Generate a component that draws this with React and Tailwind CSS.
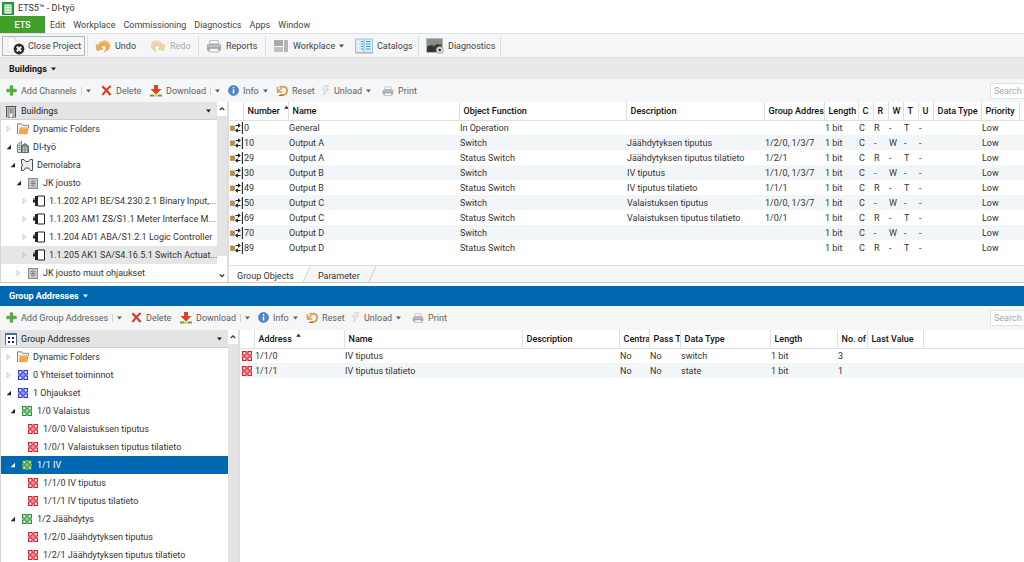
import React, { useState } from 'react';

/* ---------- Iconos ---------- */

const Caret = ({ className = '' }) => (
  <svg className={`shrink-0 ${className}`} width="5" height="4" viewBox="0 0 5 4" fill="currentColor">
    <path d="M0 0.5h5L2.5 3.5z" />
  </svg>
);

const SortUp = () => (
  <svg className="shrink-0" width="5" height="4" viewBox="0 0 5 4" fill="#222">
    <path d="M0.2 3.8h4.6L2.5 0.8z" />
  </svg>
);

const AppIcon = () => (
  <svg width="12" height="13" viewBox="0 0 12 13">
    <rect x="0.5" y="0.5" width="11" height="12" fill="#2f9e3c" stroke="#1f8f2b" />
    <rect x="2.5" y="2.5" width="7" height="9" fill="#fff" />
    <path d="M4 3.5v7M6 3.500v7M8 3.500v7" stroke="#2f9e3c" strokeWidth="0.9" strokeDasharray="1.500 1" fill="none" />
  </svg>
);

const CloseProjectIcon = () => (
  <svg width="18" height="18" viewBox="0 0 18 18">
    <path d="M1 1h7l3 3v11H1z" fill="#fff" stroke="#dcdfe2" strokeWidth="0.8" />
    <path d="M8 1v3h3" fill="#eceef0" stroke="#d2d5d8" strokeWidth="0.8" />
    <circle cx="12" cy="12" r="5.4" fill="#2b2b2b" />
    <path d="M9.8 9.8l4.4 4.4M14.2 9.8l-4.4 4.4" stroke="#fff" strokeWidth="2" />
  </svg>
);

const ArrowIcon = ({ redo = false }) => (
  <svg width="16" height="16" viewBox="0 0 16 16">
    <g transform={redo ? 'matrix(-1 0 0 1 16 0)' : undefined} opacity={redo ? 0.5 : 1}>
      <path
        d="M1 6.5l1 6 6-1.5-2-1.5c1-2.2 3.6-2.8 4.8-1.2 1 1.5.3 3.8-1.6 5.4 3.8-1 6-4 5.4-7C13.8 3 8.5 1 4.3 5.3L3.3 7.6z"
        fill="#f2ab4f"
        stroke="#d98b2b"
        strokeWidth="0.5"
      />
      <path d="M5.5 5c2.5-2.5 6.5-2 8 1.5" stroke="#fbd49a" strokeWidth="1" fill="none" />
    </g>
  </svg>
);

const PrinterIcon = ({ className = 'w-4 h-4' }) => (
  <svg className={className} viewBox="0 0 16 16">
    <path d="M4 2.5h8l1 4H3z" fill="#fafafa" stroke="#a9adb0" strokeWidth="0.8" />
    <path d="M1 6.5h2l1-1h8l1 1h2v6h-2.5l-1-2h-7l-1 2H1z" fill="#a4a8ab" />
    <path d="M2 8h12" stroke="#d9dbdd" strokeWidth="1" />
    <path d="M4 10.5h8l1.2 3.5H2.8z" fill="#f4f5f5" stroke="#9ea2a5" strokeWidth="0.7" />
  </svg>
);

const WorkplaceIcon = () => (
  <svg width="15" height="14" viewBox="0 0 15 14" shapeRendering="crispEdges">
    <rect x="0" y="1" width="9" height="6" fill="#a9a9a9" />
    <rect x="0" y="8" width="9" height="5" fill="#c0c0c0" />
    <rect x="10" y="1" width="4" height="12" fill="#b5b5b5" />
  </svg>
);

const CatalogIcon = () => (
  <svg width="18" height="16" viewBox="0 0 18 16">
    <path d="M0.5 1h8l.5.5.5-.5h8v13.5h-17z" fill="#dfeef6" stroke="#8fb9cf" strokeWidth="0.8" />
    <path d="M9 1.5v13" stroke="#7ba7bf" strokeWidth="0.8" />
    <path d="M6 3.5h2M6 6h2M6 8.5h2M6 11h2M11 3.5h4.5M11 6h4.5M11 8.5h4.5M11 11h4.5" stroke="#3d9cd2" strokeWidth="1.1" />
    <path d="M2 3h3v2.5H2zM2 7h3v2H2zM2 10.5h3v2H2z" fill="#fff" stroke="#b5d1df" strokeWidth="0.4" />
    <path d="M0.5 15.2h17" stroke="#c9a277" strokeWidth="0.7" />
  </svg>
);

const DiagnosticsIcon = () => (
  <svg width="18" height="16" viewBox="0 0 18 16">
    <rect x="0.5" y="0.5" width="16" height="14" fill="#55605a" stroke="#b9bcba" />
    <path d="M1 1h15v5L1 8z" fill="#859187" />
    <path d="M1 9l4-2 3 2 3-3 5 2v6H1z" fill="#2d3b2c" />
    <circle cx="13.8" cy="12" r="3.6" fill="#d8dad9" stroke="#888" strokeWidth="0.6" />
    <circle cx="13.8" cy="12" r="1.2" fill="#222" />
  </svg>
);

const PlusIcon = () => (
  <svg width="11" height="11" viewBox="0 0 11 11">
    <path d="M4 .5h3V4h3.5v3H7v3.5H4V7H.5V4H4z" fill="#55a83f" stroke="#7cc468" strokeWidth="0.5" />
  </svg>
);

const DeleteIcon = () => (
  <svg width="11" height="11" viewBox="0 0 11 11">
    <path d="M1.3 1.3C4 3.5 7 7 9.5 10M9.7 1C6.5 3.5 3.5 7 1.5 10" stroke="#dc3a22" strokeWidth="2.2" fill="none" />
  </svg>
);

const DownloadIcon = () => (
  <svg width="12" height="12" viewBox="0 0 12 12">
    <path d="M4 0h4v4h3.5L6 9.5.5 4H4z" fill="#dc4327" />
    <path d="M0 10.5h4" stroke="#59a94a" strokeWidth="2" />
    <path d="M4 10.5h4" stroke="#e8c548" strokeWidth="2" />
    <path d="M8 10.5h4" stroke="#59a94a" strokeWidth="2" />
  </svg>
);

const InfoIcon = () => (
  <svg width="11" height="11" viewBox="0 0 11 11">
    <circle cx="5.5" cy="5.5" r="5" fill="#4f88c6" stroke="#3a6fae" strokeWidth="0.6" />
    <path d="M5.5 4.6v4M5.5 2v1.5" stroke="#fff" strokeWidth="1.5" />
  </svg>
);

const ResetIcon = () => (
  <svg width="12" height="12" viewBox="0 0 12 12">
    <path d="M3.5 1.7h4c5 0 4.5 8-.5 8.3H4" fill="none" stroke="#dd9e4f" strokeWidth="2" />
    <path d="M1.5 2v5h5M2 6.5l4-3.5" fill="none" stroke="#dd9e4f" strokeWidth="1.6" />
    <path d="M3 10.5h4" stroke="#a56e2c" strokeWidth="1" />
  </svg>
);

const BoltIcon = () => (
  <svg width="8" height="11" viewBox="0 0 8 11">
    <path d="M3 .5L.8 5h2L1.8 10l5-6H4.3L6.5.5z" fill="#f1f2f3" stroke="#c3c6c9" strokeWidth="0.7" />
  </svg>
);

const BuildingHeadIcon = () => (
  <svg width="12" height="13" viewBox="0 0 12 13">
    <path d="M.5 1.5h11M1.5 1.5v11M10.5 1.5v11" stroke="#555" strokeWidth="1" />
    <rect x="3" y="3" width="6" height="9.5" fill="#c4c4c4" stroke="#666" strokeWidth="0.7" />
    <path d="M4.5 5h3M4.5 7h3" stroke="#444" strokeWidth="0.8" />
    <path d="M5 9h2v3.5H5z" fill="#eee" />
  </svg>
);

const GroupHeadIcon = () => (
  <svg width="12" height="12" viewBox="0 0 12 12" shapeRendering="crispEdges">
    <rect x="0" y="0" width="12" height="12" fill="#fff" />
    <path d="M0 0h12v2H0zM0 2h1v10H0zM11 2h1v10h-1z" fill="#5d6b8a" />
    <path d="M3 4h2v2H3zM7 4h2v2H7zM3 8h2v2H3zM7 8h2v2H7z" fill="#1414d8" />
  </svg>
);

const FolderIcon = () => (
  <svg width="12" height="12" viewBox="0 0 12 12">
    <path d="M.5 11V.8h4l1 1.5h6V5" fill="#f4f4f4" stroke="#777" strokeWidth="0.9" />
    <path d="M2.8 4.2h9L10.5 11.3h-9z" fill="#eda94c" />
    <path d="M3.5 5h7.5" stroke="#f9d08c" strokeWidth="0.8" />
  </svg>
);

const HouseIcon = () => (
  <svg width="12" height="12" viewBox="0 0 12 12">
    <path d="M.5 3.5l4-3v11h-4z" fill="#d9dedc" stroke="#5d6663" strokeWidth="0.8" />
    <path d="M1.5 4.5h2M1.5 6.5h2M1.5 8.5h2" stroke="#5d6663" strokeWidth="0.8" />
    <path d="M4.5 5l3.5-2.5L11.5 5v6.5h-7z" fill="#7f9089" stroke="#4b5451" strokeWidth="0.8" />
    <path d="M6 6.5h1.3V8H6zM8.7 6.5H10V8H8.700zM6 9.2h1.300v1.500H6zM8.700 9.200H10v1.500H8.700z" fill="#dfe6e3" />
  </svg>
);

// Planta del edificio: contorno con accesos en pico
const BuildingPartIcon = () => (
  <svg width="12" height="12" viewBox="0 0 12 12">
    <path d="M.5.5H3L4.500 2.500h3L9 .5h2.500v11H9.500L7.500 9h-3L2.500 11.500h-2V7L2 6 .5 5z" fill="#ececec" stroke="#4d4d4d" strokeWidth="1" />
  </svg>
);

const CabinetIcon = () => (
  <svg width="10" height="11" viewBox="0 0 10 11">
    <rect x="0.5" y="0.5" width="9" height="10" fill="#c9c9c9" stroke="#8a8a8a" />
    <path d="M5 2v7M2.5 5.5h5M3 3.5h1M6 3.5h1M3 7.5h1M6 7.5h1" stroke="#6f6f6f" strokeWidth="0.8" />
  </svg>
);

const DeviceIcon = () => (
  <svg width="12" height="12" viewBox="0 0 12 12">
    <path d="M4.5 1h7v10h-7z" fill="#fff" stroke="#222" strokeWidth="1" />
    <path d="M2 1h2.5v10H2zM0 4.5h2v3H0z" fill="#222" />
    <path d="M0 3.5h2" stroke="#777" strokeWidth="0.7" />
  </svg>
);

// Icono de dirección de grupo: cuatro celdas enlazadas
const GroupIcon = ({ className = 'text-[#e0202c]', active = false }) => (
  <svg className={`shrink-0 ${className}`} width="10" height="10" viewBox="0 0 10 10">
    {active && <rect width="10" height="10" fill="#d5e8c3" />}
    <g fill="none" stroke="currentColor" strokeWidth="1.2">
      <rect x="0.6" y="0.6" width="3.4" height="3.4" />
      <rect x="6" y="0.6" width="3.4" height="3.4" />
      <rect x="0.6" y="6" width="3.4" height="3.4" />
      <rect x="6" y="6" width="3.4" height="3.4" />
      <path d="M4 2.2h2M2.2 4v2M7.8 4v2M4 7.8h2" strokeWidth="0.9" />
    </g>
    <rect x="4.3" y="4.3" width="1.4" height="1.4" fill="currentColor" opacity="0.4" />
  </svg>
);

const ObjectIcon = () => (
  <svg width="13" height="12" viewBox="0 0 13 12">
    <rect x="0.500" y="4" width="4" height="4.500" fill="#c08a3c" stroke="#9a6a28" strokeWidth="0.5" />
    <path d="M5.5 3.5h3M7.5 8.5h3" stroke="#222" strokeWidth="1" />
    <path d="M8 1.3l2.8 2.2L8 5.7zM7.800 6.300L5 8.500l2.800 2.200z" fill="#111" />
    <path d="M12.4 0v12" stroke="#222" strokeWidth="1.1" />
  </svg>
);

const Expander = ({ state, light }) => {
  if (state === 'none') return <span className="w-2 shrink-0" />;
  return (
    <svg className="shrink-0" width="8" height="8" viewBox="0 0 8 8">
      {state === 'open' ? (
        <path d="M6 1.8v4.4H1.6z" fill={light ? '#fff' : '#222'} />
      ) : (
        <path d="M2 1.5L5 4 2 6.5z" fill="none" stroke="#b9bcbf" strokeWidth="0.8" />
      )}
    </svg>
  );
};

/* ---------- Datos ---------- */

const menuItems = ['Edit', 'Workplace', 'Commissioning', 'Diagnostics', 'Apps', 'Window'];

const buildingTree = [
  { label: 'Dynamic Folders', state: 'closed', icon: <FolderIcon />, pad: 'pl-1' },
  { label: 'DI-työ', state: 'open', icon: <HouseIcon />, pad: 'pl-1' },
  { label: 'Demolabra', state: 'open', icon: <BuildingPartIcon />, pad: 'pl-2' },
  { label: 'JK jousto', state: 'open', icon: <CabinetIcon />, pad: 'pl-[14px]' },
  { label: '1.1.202 AP1 BE/S4.230.2.1 Binary Input,...', state: 'closed', icon: <DeviceIcon />, pad: 'pl-5' },
  { label: '1.1.203 AM1 ZS/S1.1 Meter Interface M...', state: 'closed', icon: <DeviceIcon />, pad: 'pl-5' },
  { label: '1.1.204 AD1 ABA/S1.2.1 Logic Controller', state: 'closed', icon: <DeviceIcon />, pad: 'pl-5' },
  { label: '1.1.205 AK1 SA/S4.16.5.1 Switch Actuat...', state: 'closed', icon: <DeviceIcon />, pad: 'pl-5', hover: true },
  { label: 'JK jousto muut ohjaukset', state: 'closed', icon: <CabinetIcon />, pad: 'pl-[14px]' },
];

const main = <GroupIcon className="text-[#2b35e6]" />;
const middle = <GroupIcon className="text-[#2f8f3a]" />;
const address = <GroupIcon />;

const groupTree = [
  { label: 'Dynamic Folders', state: 'closed', icon: <FolderIcon />, pad: 'pl-1' },
  { label: '0 Yhteiset toiminnot', state: 'closed', icon: main, pad: 'pl-1' },
  { label: '1 Ohjaukset', state: 'open', icon: main, pad: 'pl-1' },
  { label: '1/0 Valaistus', state: 'open', icon: middle, pad: 'pl-2' },
  { label: '1/0/0 Valaistuksen tiputus', state: 'none', icon: address, pad: 'pl-[14px]' },
  { label: '1/0/1 Valaistuksen tiputus tilatieto', state: 'none', icon: address, pad: 'pl-[14px]' },
  { label: '1/1 IV', state: 'open', icon: <GroupIcon className="text-[#2f8f3a]" active />, pad: 'pl-2', selected: true },
  { label: '1/1/0 IV tiputus', state: 'none', icon: address, pad: 'pl-[14px]' },
  { label: '1/1/1 IV tiputus tilatieto', state: 'none', icon: address, pad: 'pl-[14px]' },
  { label: '1/2 Jäähdytys', state: 'open', icon: middle, pad: 'pl-2' },
  { label: '1/2/0 Jäähdytyksen tiputus', state: 'none', icon: address, pad: 'pl-[14px]' },
  { label: '1/2/1 Jäähdytyksen tiputus tilatieto', state: 'none', icon: address, pad: 'pl-[14px]' },
];

const objectColumns = [
  { label: '', width: 'w-[14px]' },
  { label: 'Number', width: 'w-[45px]', sorted: true },
  { label: 'Name', width: 'w-[171px]' },
  { label: 'Object Function', width: 'w-[167px]' },
  { label: 'Description', width: 'w-[138px]' },
  { label: 'Group Addres', width: 'w-[60px]' },
  { label: 'Length', width: 'w-[34px]' },
  { label: 'C', width: 'w-[15px]' },
  { label: 'R', width: 'w-[15px]' },
  { label: 'W', width: 'w-[15px]' },
  { label: 'T', width: 'w-[15px]' },
  { label: 'U', width: 'w-[15px]' },
  { label: 'Data Type', width: 'w-[48px]' },
  { label: 'Priority', width: 'w-[38px]' },
];

const objectRows = [
  ['0', 'General', 'In Operation', '', '', '1 bit', 'C', 'R', '-', 'T', '-', '', 'Low'],
  ['10', 'Output A', 'Switch', 'Jäähdytyksen tiputus', '1/2/0, 1/3/7', '1 bit', 'C', '-', 'W', '-', '-', '', 'Low'],
  ['29', 'Output A', 'Status Switch', 'Jäähdytyksen tiputus tilatieto', '1/2/1', '1 bit', 'C', 'R', '-', 'T', '-', '', 'Low'],
  ['30', 'Output B', 'Switch', 'IV tiputus', '1/1/0, 1/3/7', '1 bit', 'C', '-', 'W', '-', '-', '', 'Low'],
  ['49', 'Output B', 'Status Switch', 'IV tiputus tilatieto', '1/1/1', '1 bit', 'C', 'R', '-', 'T', '-', '', 'Low'],
  ['50', 'Output C', 'Switch', 'Valaistuksen tiputus', '1/0/0, 1/3/7', '1 bit', 'C', '-', 'W', '-', '-', '', 'Low'],
  ['69', 'Output C', 'Status Switch', 'Valaistuksen tiputus tilatieto', '1/0/1', '1 bit', 'C', 'R', '-', 'T', '-', '', 'Low'],
  ['70', 'Output D', 'Switch', '', '', '1 bit', 'C', '-', 'W', '-', '-', '', 'Low'],
  ['89', 'Output D', 'Status Switch', '', '', '1 bit', 'C', 'R', '-', 'T', '-', '', 'Low'],
];

const addressColumns = [
  { label: '', width: 'w-[14px]' },
  { label: 'Address', width: 'w-[90px]', sorted: true },
  { label: 'Name', width: 'w-[178px]' },
  { label: 'Description', width: 'w-[97px]' },
  { label: 'Centra', width: 'w-[30px]' },
  { label: 'Pass T', width: 'w-[31px]' },
  { label: 'Data Type', width: 'w-[90px]' },
  { label: 'Length', width: 'w-[67px]' },
  { label: 'No. of', width: 'w-[30px]' },
  { label: 'Last Value', width: 'w-[56px]' },
];

const addressRows = [
  ['1/1/0', 'IV tiputus', '', 'No', 'No', 'switch', '1 bit', '3', ''],
  ['1/1/1', 'IV tiputus tilatieto', '', 'No', 'No', 'state', '1 bit', '1', ''],
];

/* ---------- Componentes ---------- */

const Separator = () => <span className="w-px h-5 bg-[#dcdee0] shrink-0" />;

const ToolButton = ({ icon, label, caret, split, width, disabled = false }) => (
  <div className={`flex items-center shrink-0 ${width}`}>
    <button type="button" disabled={disabled} className="flex items-center gap-1 disabled:text-[#a9abad]">
      {icon}
      <span>{label}</span>
      {caret && <Caret />}
    </button>
    {split && (
      <button type="button" aria-label={`${label} options`} className="flex items-center gap-1 ml-1">
        <span className="w-px h-2 bg-[#d0d2d4]" />
        <Caret />
      </button>
    )}
  </div>
);

const PanelToolbar = ({ addLabel, addWidth, search, onSearch }) => (
  <div className="flex items-center h-[23px] pl-[6px] bg-[#f5f6f8] text-[#5c5f62] shrink-0">
    <ToolButton icon={<PlusIcon />} label={addLabel} split width={addWidth} />
    <ToolButton icon={<DeleteIcon />} label="Delete" width="w-[49px]" />
    <ToolButton icon={<DownloadIcon />} label="Download" split width="w-[78px]" />
    <ToolButton icon={<InfoIcon />} label="Info" caret width="w-12" />
    <ToolButton icon={<ResetIcon />} label="Reset" width="w-[46px]" />
    <ToolButton icon={<BoltIcon />} label="Unload" caret width="w-[60px]" />
    <ToolButton icon={<PrinterIcon className="w-3 h-3" />} label="Print" width="w-9" />
    <input
      type="text"
      aria-label="Search"
      placeholder="Search"
      value={search}
      onChange={(e) => onSearch(e.target.value)}
      className="ml-auto w-[34px] h-4 pl-[3px] bg-white border border-r-0 border-[#dfe1e3] placeholder:text-[#a6a8aa] outline-none"
    />
  </div>
);

const Tree = ({ title, icon, items, className, thumb }) => (
  <div className={`flex shrink-0 border-l border-[#d5d7d9] ${className}`}>
    <div className="flex-1 min-w-0">
      <div className="flex items-center h-[18px] pt-px pl-1 pr-[6px] gap-1 bg-[#e4e4e4] border-b border-[#cfcfcf] text-[#222]">
        {icon}
        <span className="flex-1">{title}</span>
        <Caret />
      </div>
      <ul>
        {items.map((item) => (
          <li
            key={item.label}
            className={`flex items-center h-[18px] gap-1 whitespace-nowrap ${item.pad} ${
              item.selected ? 'bg-[#0068b1] text-white' : item.hover ? 'bg-[#e6e6e6]' : ''
            }`}
          >
            <Expander state={item.state} light={item.selected} />
            <span className="w-3 flex justify-center shrink-0">{item.icon}</span>
            <span>{item.label}</span>
          </li>
        ))}
      </ul>
    </div>
    <div className="w-[10px] flex flex-col items-center bg-white">
      <svg className="shrink-0" width="10" height="14" viewBox="0 0 10 14" fill="none" stroke="#333" strokeWidth="1.3">
        <path d="M2.8 8L5 5.8 7.2 8" />
      </svg>
      <span className="flex-1 w-full bg-[#e4e4e4]" />
      {thumb && (
        <svg className="shrink-0 mt-3" width="10" height="14" viewBox="0 0 10 14" fill="none" stroke="#333" strokeWidth="1.3">
          <path d="M2.8 6.5L5 8.7 7.2 6.5" />
        </svg>
      )}
    </div>
  </div>
);

const DataTable = ({ columns, rows, renderIcon }) => (
  <table className="w-full table-fixed border-collapse text-left whitespace-nowrap">
    <colgroup>
      {columns.map((col, i) => (
        <col key={i} className={col.width} />
      ))}
      <col />
    </colgroup>
    <thead>
      <tr className="h-[18px] border-b border-[#dddfe1] text-[#111]">
        {columns.map((col, i) => (
          <th key={i} className="p-0 pt-px pl-1 font-medium border-r border-[#dddfe1] overflow-hidden">
            {col.sorted ? (
              <span className="flex items-start gap-1">
                {col.label}
                <SortUp />
              </span>
            ) : (
              col.label
            )}
          </th>
        ))}
        <th className="p-0" />
      </tr>
    </thead>
    <tbody className="text-[#333]">
      {rows.map((row) => (
        <tr key={row[0]} className="h-[15px] even:bg-[#f3f6f9]">
          <td className="p-0 pl-px">{renderIcon()}</td>
          {row.map((cell, i) => (
            <td key={i} className="p-0 pl-px overflow-hidden">
              {cell}
            </td>
          ))}
          <td className="p-0" />
        </tr>
      ))}
    </tbody>
  </table>
);

const App = () => {
  const [objectSearch, setObjectSearch] = useState('');
  const [addressSearch, setAddressSearch] = useState('');

  return (
    <div className="h-screen flex flex-col overflow-hidden bg-white text-[9px] leading-[12px] text-[#333] font-[Roboto,sans-serif]">
      {/* Barra de título */}
      <header className="flex items-center h-4 pl-[2px] gap-1 shrink-0">
        <AppIcon />
        <h1>ETS5™ - DI-työ</h1>
      </header>

      {/* Menú */}
      <nav className="flex items-center h-[18px] shrink-0 border-b border-[#e0e2e4] text-[#444]">
        <button type="button" className="w-[45px] h-full bg-[#41a02a] text-white font-medium">
          ETS
        </button>
        <div className="flex gap-2 pl-[5px]">
          {menuItems.map((item) => (
            <button key={item} type="button">
              {item}
            </button>
          ))}
        </div>
      </nav>

      {/* Barra de herramientas principal */}
      <div className="flex items-center h-6 pl-[2px] shrink-0 bg-[#f5f6f8] border-b border-[#dcdee0] text-[#444]">
        <button type="button" className="flex items-center gap-[3px] w-[83px] h-5 pl-1 mr-[2px] border border-[#b5b7b9] shrink-0 whitespace-nowrap">
          <CloseProjectIcon />
          Close Project
        </button>
        <Separator />
        <ToolButton icon={<ArrowIcon />} label="Undo" width="w-[62px] pl-[7px]" />
        <ToolButton icon={<ArrowIcon redo />} label="Redo" width="w-12" disabled />
        <Separator />
        <ToolButton icon={<PrinterIcon />} label="Reports" width="w-[66px] pl-[7px]" />
        <Separator />
        <ToolButton icon={<WorkplaceIcon />} label="Workplace" caret width="w-[89px] pl-2" />
        <ToolButton icon={<CatalogIcon />} label="Catalogs" width="w-[63px]" />
        <Separator />
        <ToolButton icon={<DiagnosticsIcon />} label="Diagnostics" width="w-[81px] pl-[7px]" />
        <Separator />
      </div>

      {/* Panel de edificios */}
      <section className="flex flex-col shrink-0">
        <h2 className="flex items-center gap-1 h-[21px] pl-[9px] bg-[#e9e9e9] font-bold text-[#111]">
          Buildings <Caret />
        </h2>
        <PanelToolbar addLabel="Add Channels" addWidth="w-[95px]" search={objectSearch} onSearch={setObjectSearch} />
        <div className="flex h-[181px] border-b border-[#c9cbcd]">
          <Tree title="Buildings" icon={<BuildingHeadIcon />} items={buildingTree} className="w-[227px]" thumb />
          <div className="w-[2px] bg-[#dcdee2] shrink-0" />
          <div className="flex-1 min-w-0 flex flex-col">
            <div className="flex-1">
              <DataTable columns={objectColumns} rows={objectRows} renderIcon={() => <ObjectIcon />} />
            </div>
            <div className="flex h-[17px] bg-[#f5f6f8] border-t border-[#dcdee0]">
              <button type="button" className="bg-white pl-2 pr-1 pt-1 whitespace-nowrap">
                Group Objects
              </button>
              <svg width="12" height="16" viewBox="0 0 12 16">
                <path d="M0 0h12L5 16H0z" fill="#fff" />
                <path d="M12 0L5 16" stroke="#cfd1d3" fill="none" />
              </svg>
              <button type="button" className="px-2 pt-1">
                Parameter
              </button>
              <svg width="8" height="16" viewBox="0 0 8 16">
                <path d="M8 0L1 16" stroke="#cfd1d3" fill="none" />
              </svg>
            </div>
          </div>
        </div>
      </section>

      {/* Panel de direcciones de grupo */}
      <section className="flex flex-col flex-1 min-h-0 mt-[3px]">
        <h2 className="flex items-center gap-1 h-5 pl-[9px] bg-[#0068b1] font-bold text-white shrink-0">
          Group Addresses <Caret />
        </h2>
        <PanelToolbar addLabel="Add Group Addresses" addWidth="w-[125px]" search={addressSearch} onSearch={setAddressSearch} />
        <div className="flex flex-1 min-h-0 pt-px bg-[#f5f6f8]">
          <Tree title="Group Addresses" icon={<GroupHeadIcon />} items={groupTree} className="w-[238px] bg-white" />
          <div className="w-[2px] bg-[#dcdee2] shrink-0" />
          <div className="flex-1 min-w-0 bg-white">
            <DataTable
              columns={addressColumns}
              rows={addressRows}
              renderIcon={() => <GroupIcon className="text-[#e0202c] ml-px" />}
            />
          </div>
        </div>
      </section>
    </div>
  );
};

export default App;
